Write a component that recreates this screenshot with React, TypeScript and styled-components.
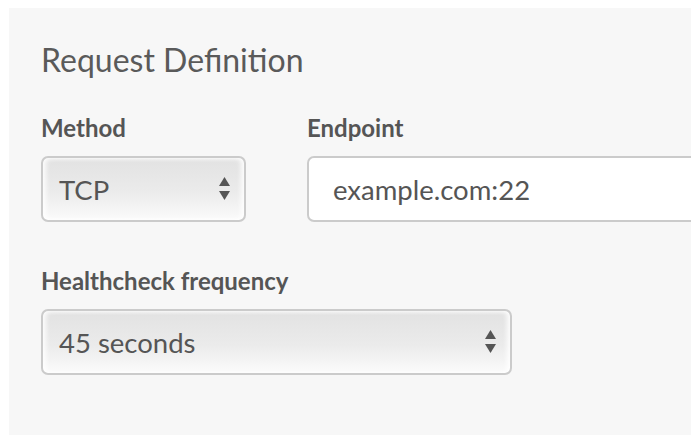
import React from 'react';
import styled, { createGlobalStyle } from "styled-components";

const GlobalStyle = createGlobalStyle`
  html, body {
    margin: 0;
    background: #ffffff;
  }
  body {
    font-family: Lato, "Open Sans", sans-serif;
    color: #555555;
  }
`

type SelectPropsType = {
    value: string
    width: number
}

const Select = (props: SelectPropsType) => {
    return (
        <StyledSelect width={props.width}>
            <SelectValue>{props.value}</SelectValue>
            <Arrows width="11" height="24" viewBox="0 0 11 24">
                <polygon points="5.5,0 11,9 0,9" fill="#555"/>
                <polygon points="0,14 11,14 5.5,23" fill="#555"/>
            </Arrows>
        </StyledSelect>
    );
};

export default function App() {
    return (
        <Page>
            <GlobalStyle/>
            <Panel>
                <Title>Request Definition</Title>
                <Row>
                    <Field>
                        <Label>Method</Label>
                        <Select value="TCP" width={205}/>
                    </Field>
                    <Field>
                        <Label>Endpoint</Label>
                        <Input readOnly defaultValue="example.com:22"/>
                    </Field>
                </Row>
                <Field>
                    <Label>Healthcheck frequency</Label>
                    <Select value="45 seconds" width={471}/>
                </Field>
            </Panel>
        </Page>
    );
}

const Page = styled.div`
  padding: 8px 0 0 9px;
`

const Panel = styled.div`
  box-sizing: border-box;
  width: 682px;
  height: 427px;
  background: #f7f7f7;
  padding: 33px 0 0 32px;
  overflow: hidden;
  display: flex;
  flex-direction: column;
`

const Title = styled.h2`
  margin: 0 0 35px;
  font-size: 32px;
  font-weight: 400;
  line-height: 38px;
  color: #5a5a5a;
`

const Row = styled.div`
  display: flex;
  gap: 61px;
  margin-bottom: 45px;
`

const Field = styled.div`
  display: flex;
  flex-direction: column;
`

const Label = styled.div`
  font-size: 24px;
  font-weight: 700;
  line-height: 28px;
  color: #555;
  margin-bottom: 14px;
`

const StyledSelect = styled.div<{ width: number }>`
  box-sizing: border-box;
  width: ${props => props.width}px;
  height: 66px;
  border: 2px solid #cbcbcb;
  border-radius: 7px;
  background: linear-gradient(#e2e2e2, #ebebeb 55%, #fbfbfb);
  box-shadow: inset 3px 0 5px rgba(255, 255, 255, 0.9), inset -3px 0 5px rgba(255, 255, 255, 0.9);
  display: flex;
  align-items: center;
  justify-content: space-between;
  padding: 0 14px 0 16px;
`

const SelectValue = styled.span`
  font-size: 27.5px;
  color: #555;
`

const Arrows = styled.svg`
  display: block;
`

const Input = styled.input`
  box-sizing: border-box;
  width: 420px;
  height: 66px;
  border: 2px solid #cbcbcb;
  border-radius: 7px;
  background: #fff;
  padding: 0 24px;
  font-family: Lato, "Open Sans", sans-serif;
  font-size: 27.5px;
  color: #555;
  outline: none;
`
